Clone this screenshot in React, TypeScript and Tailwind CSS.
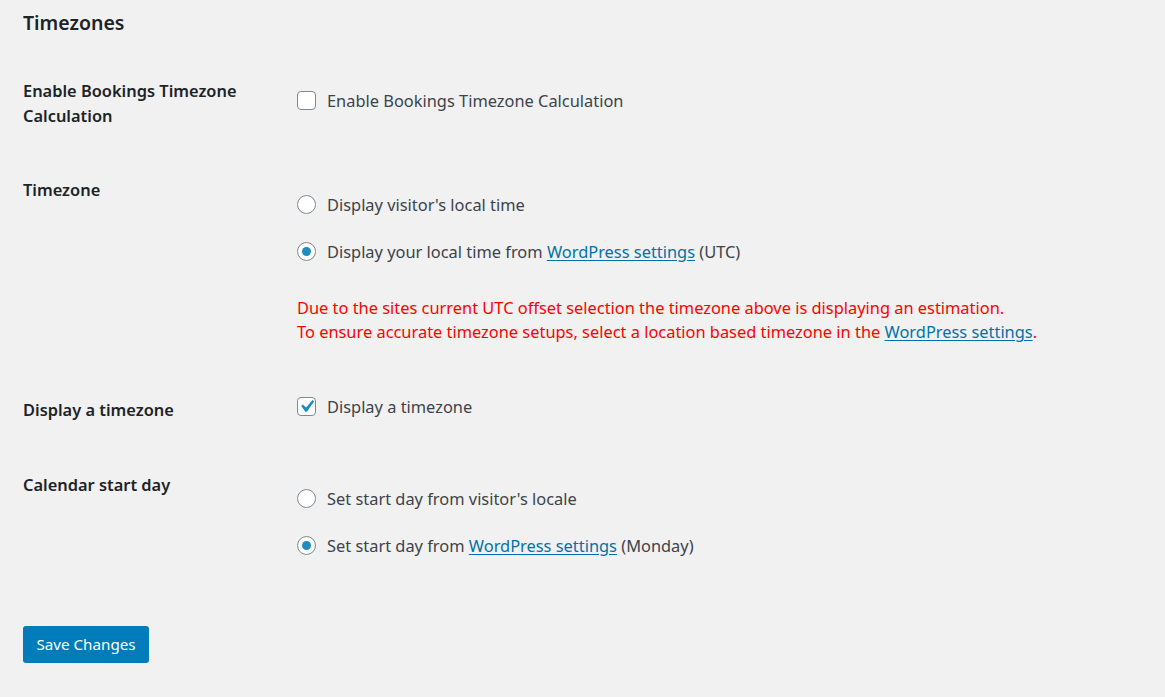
import React, { useState } from 'react';

const font = { fontFamily: '"Noto Sans", "Liberation Sans", sans-serif' };

const Checkbox: React.FC<{ checked: boolean; onChange: () => void }> = ({ checked, onChange }) => (
    <button
        type="button"
        onClick={onChange}
        className="w-[19px] h-[19px] shrink-0 rounded-[4px] border border-[#7e8993] bg-white flex items-center justify-center overflow-visible"
    >
        {checked && (
            <svg width="25" height="25" viewBox="0 0 20 20" className="shrink-0 -m-[4px]">
                <path d="M14.83 4.89l1.34.94-5.81 8.38H9.02L5.78 9.67l1.34-1.25 2.57 2.4z" fill="#1e8cbe" />
            </svg>
        )}
    </button>
);

const Radio: React.FC<{ checked: boolean; onChange: () => void }> = ({ checked, onChange }) => (
    <button
        type="button"
        onClick={onChange}
        className="w-[19px] h-[19px] shrink-0 rounded-full border border-[#7e8993] bg-white flex items-center justify-center"
    >
        {checked && <span className="w-[9px] h-[9px] rounded-full bg-[#1e8cbe]" />}
    </button>
);

const Link: React.FC<{ children: React.ReactNode }> = ({ children }) => (
    <a href="#" className="text-[#0073aa] underline underline-offset-2">{children}</a>
);

const App: React.FC = () => {
    const [enableCalc, setEnableCalc] = useState(false);
    const [timezone, setTimezone] = useState<'visitor' | 'wp'>('wp');
    const [displayTz, setDisplayTz] = useState(true);
    const [startDay, setStartDay] = useState<'visitor' | 'wp'>('wp');

    return (
        <div className="min-h-screen bg-[#f1f1f1] px-[23px] pt-[9px] text-[16.4px] leading-[25px] text-[#3c434a]" style={font}>
            <h2 className="text-[19.5px] leading-[28px] font-semibold text-[#1d2327]">Timezones</h2>

            {/* Enable calculation */}
            <div className="flex items-start mt-[41px]">
                <div className="w-[274px] pr-8 font-semibold text-[#1d2327]">Enable Bookings Timezone Calculation</div>
                <div className="pt-[10px]">
                    <label className="flex items-center gap-[11px]">
                        <Checkbox checked={enableCalc} onChange={() => setEnableCalc(!enableCalc)} />
                        Enable Bookings Timezone Calculation
                    </label>
                </div>
            </div>

            {/* Timezone */}
            <div className="flex items-start mt-[49px]">
                <div className="w-[274px] font-semibold text-[#1d2327]">Timezone</div>
                <div className="pt-[15px]">
                    <div className="flex flex-col gap-[22px]">
                        <label className="flex items-center gap-[11px]">
                            <Radio checked={timezone === 'visitor'} onChange={() => setTimezone('visitor')} />
                            Display visitor's local time
                        </label>
                        <label className="flex items-center gap-[11px]">
                            <Radio checked={timezone === 'wp'} onChange={() => setTimezone('wp')} />
                            <span>Display your local time from <Link>WordPress settings</Link> (UTC)</span>
                        </label>
                    </div>
                    <p className="mt-[32px] leading-[24px] text-[#ff0000]">
                        Due to the sites current UTC offset selection the timezone above is displaying an estimation.
                        <br />
                        To ensure accurate timezone setups, select a location based timezone in the <Link>WordPress settings</Link>.
                    </p>
                </div>
            </div>

            {/* Display a timezone */}
            <div className="flex items-start mt-[50px]">
                <div className="w-[274px] pt-[3px] font-semibold text-[#1d2327]">Display a timezone</div>
                <label className="flex items-center gap-[11px]">
                    <Checkbox checked={displayTz} onChange={() => setDisplayTz(!displayTz)} />
                    Display a timezone
                </label>
            </div>

            {/* Calendar start day */}
            <div className="flex items-start mt-[50px]">
                <div className="w-[274px] font-semibold text-[#1d2327]">Calendar start day</div>
                <div className="pt-[14px] flex flex-col gap-[22px]">
                    <label className="flex items-center gap-[11px]">
                        <Radio checked={startDay === 'visitor'} onChange={() => setStartDay('visitor')} />
                        Set start day from visitor's locale
                    </label>
                    <label className="flex items-center gap-[11px]">
                        <Radio checked={startDay === 'wp'} onChange={() => setStartDay('wp')} />
                        <span>Set start day from <Link>WordPress settings</Link> (Monday)</span>
                    </label>
                </div>
            </div>

            <button
                type="button"
                className="mt-[68px] w-[126px] h-[37px] rounded-[3px] bg-[#007cba] text-white text-[15.2px] leading-[37px] text-center"
            >
                Save Changes
            </button>
        </div>
    );
};

export default App;
